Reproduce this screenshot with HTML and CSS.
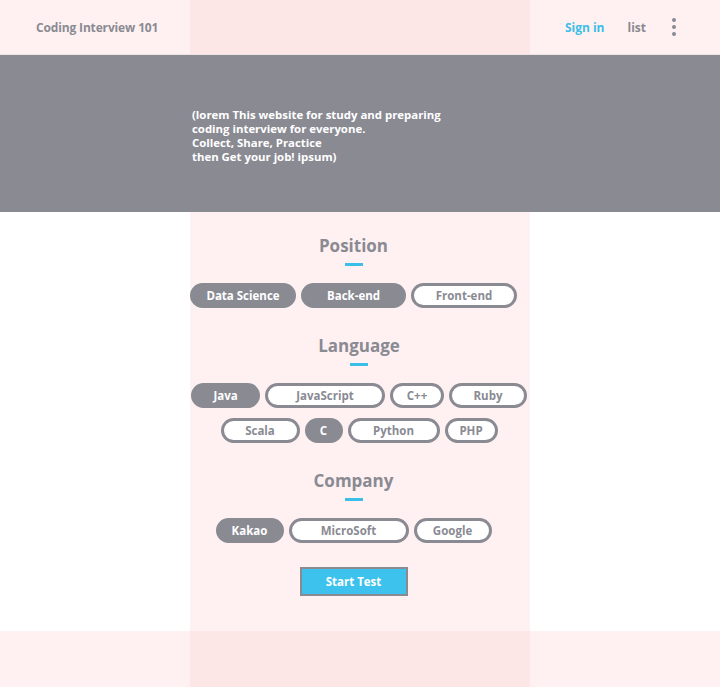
FILE: index.html
```html
<!DOCTYPE html>
<html lang="en">
<head>
<meta charset="utf-8">
<title>Coding Interview 101</title>
<link rel="stylesheet" href="styles.css">
</head>
<body>
<header class="topbar">
  <div class="brand">Coding Interview 101</div>
  <nav class="nav">
    <a class="nav-link nav-signin" href="#">Sign in</a>
    <a class="nav-link" href="#">list</a>
    <span class="kebab"><i></i><i></i><i></i></span>
  </nav>
</header>

<section class="hero">
  <div class="hero-inner">
    <p class="hero-text">(lorem This website for study and preparing<br>coding interview for everyone.<br>Collect, Share, Practice<br>then Get your job! ipsum)</p>
  </div>
</section>

<main class="page">
  <div class="column">
    <div class="inner">
      <section class="group">
        <h2 class="group-title">Position</h2>
        <span class="bar"></span>
        <div class="chips">
          <button class="chip on w106">Data Science</button>
          <button class="chip on w105">Back-end</button>
          <button class="chip w106">Front-end</button>
        </div>
      </section>

      <section class="group group-lang">
        <h2 class="group-title">Language</h2>
        <span class="bar"></span>
        <div class="chips">
          <button class="chip on w69">Java</button>
          <button class="chip w120">JavaScript</button>
          <button class="chip w54">C++</button>
          <button class="chip w78">Ruby</button>
        </div>
        <div class="chips">
          <button class="chip w79">Scala</button>
          <button class="chip on w38">C</button>
          <button class="chip w92">Python</button>
          <button class="chip w53">PHP</button>
        </div>
      </section>

      <section class="group group-last">
        <h2 class="group-title">Company</h2>
        <span class="bar"></span>
        <div class="chips">
          <button class="chip on w68">Kakao</button>
          <button class="chip w120">MicroSoft</button>
          <button class="chip w78">Google</button>
        </div>
      </section>

      <div class="start-wrap">
        <button class="start">Start Test</button>
      </div>
    </div>
  </div>
</main>

<footer class="footer"></footer>
</body>
</html>
```
FILE: styles.css
```css
* { box-sizing: border-box; }

html, body {
  margin: 0;
  padding: 0;
  background: #ffffff;
}

body {
  font-family: "Open Sans", "Noto Sans", sans-serif;
  font-weight: 700;
  color: #8a8a93;
}

.topbar {
  height: 55px;
  display: flex;
  align-items: center;
  justify-content: space-between;
  padding: 1px 0 0 36px;
  border-bottom: 1px solid #ece4e4;
  background: linear-gradient(90deg, #fff1f1 0, #fff1f1 calc(50% - 170px), #fde7e6 calc(50% - 170px), #fde7e6 calc(50% + 170px), #fff1f1 calc(50% + 170px));
}

.brand {
  font-size: 12px;
  color: #8a8a93;
  letter-spacing: -0.15px;
}

.nav {
  display: flex;
  align-items: center;
  height: 100%;
}

.nav-link {
  font-size: 12px;
  color: #8a8a93;
  text-decoration: none;
}

.nav-signin {
  color: #3bbfe9;
  margin-right: 23px;
}

.kebab {
  display: flex;
  flex-direction: column;
  gap: 3px;
  margin: -1px 44px 0 26px;
}

.kebab i {
  display: block;
  width: 4px;
  height: 4px;
  border-radius: 50%;
  background: #8a8a93;
}

.hero {
  background: #8a8a93;
  height: 157px;
}

.hero-inner {
  width: 340px;
  margin: 0 auto;
  padding: 53px 0 0 2px;
}

.hero-text {
  margin: 0;
  font-size: 11.4px;
  line-height: 14px;
  color: #ffffff;
}

.page {
  background: #ffffff;
}

.column {
  width: 340px;
  margin: 0 auto;
  background: #fff1f1;
  padding: 22px 0 34px;
  min-height: 419px;
}

.inner {
  width: 327px;
}

.group {
  display: flex;
  flex-direction: column;
  align-items: center;
  margin-bottom: 26px;
}

.group-last {
  margin-bottom: 24px;
}

.group-lang {
  width: 338px;
}

.group-title {
  margin: 0;
  font-size: 17px;
  line-height: 24px;
  font-weight: 700;
  color: #8a8a93;
}

.bar {
  display: block;
  width: 18px;
  height: 3px;
  background: #3bbfe9;
  margin: 5px 0 17px;
}

.chips {
  display: flex;
  justify-content: center;
  gap: 5px;
}

.chips + .chips {
  margin-top: 10px;
}

.chip {
  height: 25px;
  padding: 0;
  border: 3px solid #8a8a93;
  border-radius: 13px;
  background: #ffffff;
  color: #8a8a93;
  font-family: inherit;
  font-weight: 700;
  font-size: 11.5px;
  line-height: 19px;
  text-align: center;
}

.chip.on {
  background: #8a8a93;
  color: #ffffff;
}

.w38 { width: 38px; }
.w53 { width: 53px; }
.w54 { width: 54px; }
.w68 { width: 68px; }
.w69 { width: 69px; }
.w78 { width: 78px; }
.w79 { width: 79px; }
.w92 { width: 92px; }
.w105 { width: 105px; }
.w106 { width: 106px; }
.w120 { width: 120px; }

.start-wrap {
  display: flex;
  justify-content: center;
}

.start {
  width: 108px;
  height: 29px;
  border: 2px solid #8a8a93;
  background: #3cc2ec;
  color: #ffffff;
  font-family: inherit;
  font-weight: 700;
  font-size: 11.5px;
  padding: 0;
}

.footer {
  height: 60px;
  background: linear-gradient(90deg, #fff1f1 0, #fff1f1 calc(50% - 170px), #fde7e6 calc(50% - 170px), #fde7e6 calc(50% + 170px), #fff1f1 calc(50% + 170px));
}
```
